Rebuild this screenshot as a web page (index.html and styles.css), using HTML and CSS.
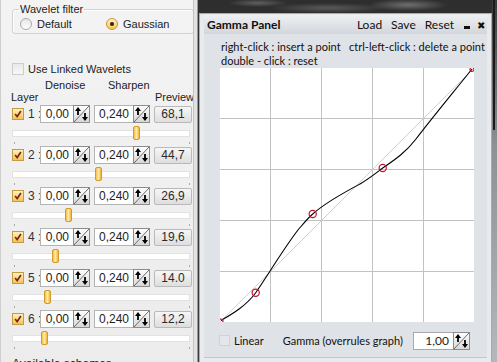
FILE: index.html
```html
<!DOCTYPE html>
<html lang="en">
<head>
    <meta charset="UTF-8">
    <title>Wavelets - Gamma Panel</title>
    <link rel="stylesheet" href="styles.css">
</head>
<body>
    <svg width="0" height="0" class="defs">
        <defs>
            <linearGradient id="spin-bg" x1="0" y1="0" x2="0" y2="1">
                <stop offset="0" stop-color="#ffffff"/>
                <stop offset="1" stop-color="#d6d6d6"/>
            </linearGradient>
            <symbol id="spin" viewBox="0 0 17 18">
                <rect x="0.5" y="0.5" width="16" height="17" fill="url(#spin-bg)" stroke="#8c8c8c"/>
                <line x1="1" y1="17" x2="16" y2="1" stroke="#6a6a6a"/>
                <line x1="5" y1="4" x2="5" y2="10" stroke="#000" stroke-width="1.8"/>
                <polygon points="2,6 5,2 8,6" fill="#000"/>
                <line x1="12" y1="8" x2="12" y2="14" stroke="#000" stroke-width="1.8"/>
                <polygon points="9,12 12,16 15,12" fill="#000"/>
            </symbol>
            <symbol id="tick" viewBox="0 0 12 12">
                <polyline points="2.5,6 5,9 9.5,2.5" fill="none" stroke="#7b2410" stroke-width="2"/>
            </symbol>
        </defs>
    </svg>

    <div class="app">
        <div class="side">
            <fieldset class="filter">
                <legend>Wavelet filter</legend>
                <div class="radios">
                    <span class="opt opt-first"><i class="radio"></i>Default</span>
                    <span class="opt"><i class="radio on"></i>Gaussian</span>
                </div>
            </fieldset>

            <div class="linked"><i class="box"></i>Use Linked Wavelets</div>

            <div class="heads">
                <div class="heads-top"><span class="h-den">Denoise</span><span>Sharpen</span></div>
                <div class="heads-bot"><span>Layer</span><span>Preview</span></div>
            </div>

            <div class="layer">
                <div class="line">
                    <span class="check"><svg><use href="#tick"/></svg></span>
                    <span class="num">1 :</span>
                    <span class="field f-den">0,00</span><svg class="spin"><use href="#spin"/></svg>
                    <span class="field f-sharp">0,240</span><svg class="spin"><use href="#spin"/></svg>
                    <span class="preview">68,1</span>
                </div>
                <div class="track"><span class="thumb" style="left: 120px"></span></div>
                <div class="ticks"><i></i><i></i></div>
            </div>

            <div class="layer">
                <div class="line">
                    <span class="check"><svg><use href="#tick"/></svg></span>
                    <span class="num">2 :</span>
                    <span class="field f-den">0,00</span><svg class="spin"><use href="#spin"/></svg>
                    <span class="field f-sharp">0,240</span><svg class="spin"><use href="#spin"/></svg>
                    <span class="preview">44,7</span>
                </div>
                <div class="track"><span class="thumb" style="left: 82px"></span></div>
                <div class="ticks"><i></i><i></i></div>
            </div>

            <div class="layer">
                <div class="line">
                    <span class="check"><svg><use href="#tick"/></svg></span>
                    <span class="num">3 :</span>
                    <span class="field f-den">0,00</span><svg class="spin"><use href="#spin"/></svg>
                    <span class="field f-sharp">0,240</span><svg class="spin"><use href="#spin"/></svg>
                    <span class="preview">26,9</span>
                </div>
                <div class="track"><span class="thumb" style="left: 52px"></span></div>
                <div class="ticks"><i></i><i></i></div>
            </div>

            <div class="layer">
                <div class="line">
                    <span class="check"><svg><use href="#tick"/></svg></span>
                    <span class="num">4 :</span>
                    <span class="field f-den">0,00</span><svg class="spin"><use href="#spin"/></svg>
                    <span class="field f-sharp">0,240</span><svg class="spin"><use href="#spin"/></svg>
                    <span class="preview">19,6</span>
                </div>
                <div class="track"><span class="thumb" style="left: 39px"></span></div>
                <div class="ticks"><i></i><i></i></div>
            </div>

            <div class="layer">
                <div class="line">
                    <span class="check"><svg><use href="#tick"/></svg></span>
                    <span class="num">5 :</span>
                    <span class="field f-den">0,00</span><svg class="spin"><use href="#spin"/></svg>
                    <span class="field f-sharp">0,240</span><svg class="spin"><use href="#spin"/></svg>
                    <span class="preview">14.0</span>
                </div>
                <div class="track"><span class="thumb" style="left: 31px"></span></div>
                <div class="ticks"><i></i><i></i></div>
            </div>

            <div class="layer">
                <div class="line">
                    <span class="check"><svg><use href="#tick"/></svg></span>
                    <span class="num">6 :</span>
                    <span class="field f-den">0,00</span><svg class="spin"><use href="#spin"/></svg>
                    <span class="field f-sharp">0,240</span><svg class="spin"><use href="#spin"/></svg>
                    <span class="preview">12,2</span>
                </div>
                <div class="track"><span class="thumb" style="left: 28px"></span></div>
                <div class="ticks"><i></i><i></i></div>
            </div>

            <div class="schemes">Available schemes</div>
        </div>
        <div class="sep"></div>

        <div class="desk">
            <div class="gamma">
                <div class="title">
                    <b>Gamma Panel</b>
                    <span class="menu">
                        <span>Load</span>
                        <span>Save</span>
                        <span>Reset</span>
                        <span class="min"></span>
                        <span class="close">&#x2716;</span>
                    </span>
                </div>
                <div class="body">
                    <div class="hint">right-click : insert a point   ctrl-left-click : delete a point
double - click : reset</div>
                    <svg class="graph" width="254" height="254" viewBox="0 0 254 254">
                        <rect width="254" height="254" fill="#fff"/>
                        <g stroke="#c2c2c2" stroke-width="1">
                            <line x1="50.5" y1="0" x2="50.5" y2="254"/>
                            <line x1="101.5" y1="0" x2="101.5" y2="254"/>
                            <line x1="152.5" y1="0" x2="152.5" y2="254"/>
                            <line x1="203.5" y1="0" x2="203.5" y2="254"/>
                            <line x1="0" y1="50.5" x2="254" y2="50.5"/>
                            <line x1="0" y1="101.5" x2="254" y2="101.5"/>
                            <line x1="0" y1="152.5" x2="254" y2="152.5"/>
                            <line x1="0" y1="203.5" x2="254" y2="203.5"/>
                        </g>
                        <line x1="0" y1="254" x2="253" y2="1" stroke="#cfcfcf"/>
                        <path fill="none" stroke="#000" stroke-width="1.1"
                            d="M1 252.5 C12 246, 26 238, 35.7 224.7 C48 207, 64 180, 78 162 C84 155, 88 150, 92.7 146 C106 134, 125 124, 140 116 C150 110, 156 105, 162.7 100 C176 91, 186 84, 196 71 C212 50, 232 26, 252 1"/>
                        <g fill="none" stroke="#c8102e" stroke-width="1.2">
                            <circle cx="35.7" cy="224.7" r="3.6"/>
                            <circle cx="92.7" cy="146" r="3.6"/>
                            <circle cx="162.7" cy="100" r="3.6"/>
                            <circle cx="252" cy="1.5" r="2"/>
                            <circle cx="1" cy="253" r="2"/>
                        </g>
                    </svg>
                    <div class="foot">
                        <i class="box light"></i>
                        <span class="lin">Linear</span>
                        <span class="gam">Gamma (overrules graph)</span>
                        <span class="field f-gamma">1,00</span><svg class="spin"><use href="#spin"/></svg>
                    </div>
                </div>
            </div>
            <div class="edge"></div>
        </div>
    </div>
</body>
</html>
```

FILE: styles.css
```css
* {
    box-sizing: border-box;
}

body {
    margin: 0;
    width: 497px;
    height: 362px;
    overflow: hidden;
    font-family: "Liberation Sans", Arial, sans-serif;
    font-size: 11px;
    color: #1c1c1c;
}

.defs {
    position: absolute;
}

.app {
    display: flex;
    height: 362px;
}

/* left panel */
.side {
    width: 193px;
    flex: none;
    padding-left: 11px;
    border-left: 1px solid #cfcfcf;
    background: linear-gradient(#f3f3f3, #ececec);
}

.sep {
    width: 5px;
    flex: none;
    background: #e2e2e2;
    border-left: 1px solid #c4c4c4;
    border-right: 1px solid #9a9a9a;
}

.filter {
    margin: 3px 0 0 0;
    width: 182px;
    padding: 0 0 1px 6px;
    border: 1px solid #d2d2d2;
    border-radius: 3px;
    box-shadow: inset 1px 1px 0 #fff;
}

.filter legend {
    padding: 0 1px;
    line-height: 13px;
}

.radios {
    display: flex;
    align-items: center;
    height: 16px;
    margin-left: 1px;
}

.opt {
    display: flex;
    align-items: center;
    gap: 5px;
}

.opt-first {
    width: 86px;
}

.radio {
    width: 12px;
    height: 12px;
    border-radius: 50%;
    border: 1px solid #a9a9a9;
    background: linear-gradient(#e6e6e6, #ffffff);
    display: flex;
    align-items: center;
    justify-content: center;
}

.radio.on {
    border-color: #c9963a;
    background: linear-gradient(#fff3c4, #f7c659);
}

.radio.on::after {
    content: "";
    width: 4px;
    height: 4px;
    border-radius: 50%;
    background: #3a2200;
}

.box {
    width: 12px;
    height: 12px;
    border: 1px solid #cdcdcd;
    background: linear-gradient(#e9e9e9, #f8f8f8);
    flex: none;
}

.linked {
    display: flex;
    align-items: center;
    gap: 4px;
    margin-top: 28px;
    height: 13px;
}

.heads {
    margin-top: 4px;
    width: 182px;
}

.heads-top {
    height: 12px;
    line-height: 12px;
    padding-left: 33px;
}

.h-den {
    display: inline-block;
    width: 63px;
}

.heads-bot {
    display: flex;
    justify-content: space-between;
    height: 12px;
    line-height: 12px;
    margin-left: -1px;
}

.layer {
    height: 41px;
    margin-top: 2px;
    margin-bottom: -2px;
}

.line {
    display: flex;
    align-items: center;
    height: 18px;
}

.check {
    width: 12px;
    height: 12px;
    border: 1px solid #c39a45;
    background: linear-gradient(#fff0b8, #f4c358);
    flex: none;
}

.check svg {
    display: block;
    width: 10px;
    height: 10px;
}

.num {
    width: 12px;
    margin-left: 4px;
    white-space: nowrap;
    font-size: 12px;
    color: #333;
}

.field {
    height: 18px;
    line-height: 16px;
    background: #fff;
    border: 1px solid #b4b4b4;
    border-right: none;
    text-align: right;
    padding-right: 4px;
    font-size: 12px;
    color: #222;
}

.f-den {
    width: 33px;
}

.f-sharp {
    width: 39px;
    margin-left: 4px;
}

.spin {
    width: 17px;
    height: 18px;
    flex: none;
}

.preview {
    width: 38px;
    height: 17px;
    margin-left: 4px;
    line-height: 15px;
    text-align: center;
    font-size: 12px;
    color: #2a2a2a;
    border: 1px solid #b9b9b9;
    border-radius: 2px;
    background: linear-gradient(#f6f6f6, #dedede);
}

.track {
    position: relative;
    width: 178px;
    height: 7px;
    margin-top: 7px;
    background: #fff;
    border: 1px solid #e2e2e2;
}

.thumb {
    position: absolute;
    top: -5px;
    width: 7px;
    height: 14px;
    border: 1px solid #d29a2a;
    border-radius: 2px;
    background: linear-gradient(90deg, #f6c24b, #ffe9a6 50%, #f2b437);
}

.ticks {
    display: flex;
    justify-content: space-between;
    width: 176px;
    margin: 5px 0 0 2px;
}

.ticks i {
    width: 1px;
    height: 2px;
    background: #a8a8a8;
}

.schemes {
    margin-top: 9px;
    font-size: 12px;
    line-height: 13px;
}

/* desktop with the gamma window */
.desk {
    flex: 1;
    display: flex;
    align-items: flex-start;
    padding-top: 13px;
    padding-left: 1px;
    background:
        radial-gradient(ellipse 40px 6px at 210px 5px, #6e6e6e, transparent),
        radial-gradient(ellipse 60px 5px at 130px 8px, #5a5a5a, transparent),
        radial-gradient(ellipse 30px 4px at 60px 3px, #606060, transparent),
        linear-gradient(#2e2e2e, #3a3a3a);
}

.gamma {
    width: 293px;
    height: 352px;
    padding: 1px 4px 0 4px;
    font-family: Lato, "Liberation Sans", sans-serif;
    font-size: 11px;
    color: #111;
    background: #e8eaed;
    border: 1px solid #a7acb3;
}

.title {
    display: flex;
    align-items: center;
    height: 19px;
    padding-left: 3px;
    background: linear-gradient(#eef0f2, #d2d6db);
}

.title b {
    font-size: 12px;
}

.menu {
    margin-left: auto;
    display: flex;
    align-items: center;
    gap: 9px;
    font-size: 12px;
}

.min {
    width: 6px;
    height: 3px;
    margin-top: 6px;
    margin-left: 1px;
    background: #111;
}

.close {
    font-size: 10px;
    margin-left: -2px;
    margin-right: 2px;
}

.body {
    height: 324px;
    background: #dfe2e6;
    border-bottom: 1px solid #c2c6cc;
}

.hint {
    white-space: pre;
    padding: 6px 0 0 17px;
    line-height: 14px;
}

.graph {
    display: block;
    margin-left: 16px;
}

.foot {
    display: flex;
    align-items: center;
    height: 37px;
    padding-left: 15px;
}

.box.light {
    width: 11px;
    height: 11px;
    border-color: #cfd2d6;
    background: #e4e6e9;
}

.lin {
    margin-left: 4px;
}

.gam {
    margin-left: 19px;
}

.f-gamma {
    width: 40px;
    margin-left: 10px;
    border-color: #a8a8a8;
}

.edge {
    flex: 1;
    align-self: stretch;
    margin-top: -13px;
    background:
        linear-gradient(90deg, transparent 1px, #1a1a1a 1px, #1a1a1a 3px, transparent 3px) 0 0 / 100% 130px no-repeat,
        linear-gradient(#3a3a3a, #8e9094 40%, #b4b7bb);
}
```
